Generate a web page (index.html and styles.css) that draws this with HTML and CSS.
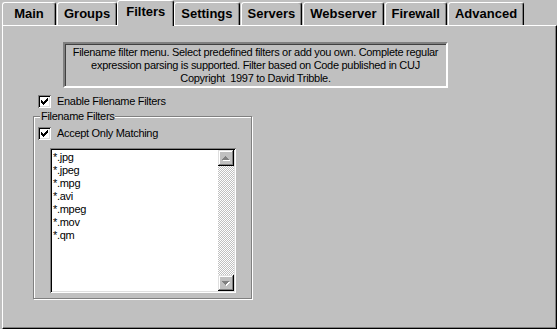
FILE: index.html
```html
<!DOCTYPE html>
<html lang="en">
<head>
  <meta charset="UTF-8" />
  <title>Filters</title>
  <link rel="stylesheet" href="styles.css">
</head>
<body>
  <div class="tabs">
    <div class="tab">Main</div>
    <div class="tab">Groups</div>
    <div class="tab tab-active">Filters</div>
    <div class="tab">Settings</div>
    <div class="tab">Servers</div>
    <div class="tab">Webserver</div>
    <div class="tab">Firewall</div>
    <div class="tab">Advanced</div>
  </div>
  <div class="panel">
    <div class="info">
      Filename filter menu. Select predefined filters or add you own. Complete regular<br>
      expression parsing is supported. Filter based on Code published in CUJ<br>
      Copyright&nbsp; 1997 to David Tribble.
    </div>
    <label class="check check-enable">
      <span class="box">
        <svg width="13" height="13" viewBox="0 0 13 13" shape-rendering="crispEdges"><path d="M9 3h1v1h-1z M8 4h2v1h-2z M3 5h1v1h-1z M7 5h3v1h-3z M3 6h2v1h-2z M6 6h3v1h-3z M3 7h5v1h-5z M4 8h3v1h-3z M5 9h1v1h-1z" fill="#000"/></svg>
      </span>
      Enable Filename Filters
    </label>
    <fieldset class="group">
      <legend>Filename Filters</legend>
      <label class="check">
        <span class="box">
          <svg width="13" height="13" viewBox="0 0 13 13" shape-rendering="crispEdges"><path d="M9 3h1v1h-1z M8 4h2v1h-2z M3 5h1v1h-1z M7 5h3v1h-3z M3 6h2v1h-2z M6 6h3v1h-3z M3 7h5v1h-5z M4 8h3v1h-3z M5 9h1v1h-1z" fill="#000"/></svg>
        </span>
        Accept Only Matching
      </label>
      <div class="listbox">
        <ul class="items">
          <li>*.jpg</li>
          <li>*.jpeg</li>
          <li>*.mpg</li>
          <li>*.avi</li>
          <li>*.mpeg</li>
          <li>*.mov</li>
          <li>*.qm</li>
        </ul>
        <div class="scrollbar">
          <div class="sb-btn">
            <svg width="16" height="16" viewBox="0 0 16 16" shape-rendering="crispEdges">
              <path d="M8 7h1v1h1v1h1v1h1v1H5V10h1V9h1V8h1z" fill="#fff"/>
              <path d="M7 6h1v1h1v1h1v1h1v1H4V9h1V8h1V7h1z" fill="#808080"/>
            </svg>
          </div>
          <div class="sb-track"></div>
          <div class="sb-btn">
            <svg width="16" height="16" viewBox="0 0 16 16" shape-rendering="crispEdges">
              <path d="M5 7h7v1h-1v1h-1v1h-1v1H8V10H7V9H6V8H5z" fill="#fff"/>
              <path d="M4 6h7v1h-1v1h-1v1h-1v1H7V9H6V8H5V7H4z" fill="#808080"/>
            </svg>
          </div>
        </div>
      </div>
    </fieldset>
  </div>
</body>
</html>
```

FILE: styles.css
```css
:root {
  --face: #c0c0c0;
  --light: #dfdfdf;
  --shadow: #808080;
  --dark: #000;
}
* { box-sizing: border-box; }
body {
  margin: 0;
  padding-left: 2px;
  height: 100vh;
  display: flex;
  flex-direction: column;
  overflow: hidden;
  background: var(--face);
  color: #000;
  font-family: "Liberation Sans", Arial, sans-serif;
  font-size: 11px;
  letter-spacing: -0.3px;
}

/* tab strip */
.tabs {
  display: flex;
  align-items: flex-end;
  height: 25px;
}
.tab {
  height: 23px;
  min-width: 54px;
  margin-right: 1px;
  padding: 0 6px;
  background: var(--face);
  border: 1px solid;
  border-bottom: none;
  border-color: #fff var(--dark) var(--dark) #fff;
  border-radius: 3px 3px 0 0;
  box-shadow: inset -1px 0 var(--shadow);
  font-size: 13px;
  font-weight: bold;
  letter-spacing: 0;
  line-height: 22px;
  text-align: center;
}
.tab-active {
  position: relative;
  z-index: 1;
  height: 26px;
  margin: 0 0 -1px -1px;
  padding: 0 8px 3px;
}

/* page */
.panel {
  flex: 1;
  padding: 16px 0 0 0;
  border: 1px solid;
  border-color: #fff var(--dark) var(--dark) #fff;
  box-shadow: inset -1px -1px var(--shadow);
}
.info {
  width: 385px;
  margin-left: 60px;
  padding: 2px 0 1px;
  border: 2px solid;
  border-color: var(--shadow) #fff #fff var(--shadow);
  box-shadow: inset 1px 1px #404040;
  line-height: 13px;
  text-align: center;
}

.check {
  display: flex;
  align-items: center;
  gap: 6px;
  height: 13px;
  line-height: 13px;
}
.check-enable { margin: 7px 0 0 35px; }
.box {
  flex: none;
  display: flex;
  width: 13px;
  height: 13px;
  background: #fff;
  box-shadow: inset 1px 1px var(--shadow), inset -1px -1px #fff,
              inset 2px 2px var(--dark), inset -2px -2px var(--light);
}

.group {
  width: 219px;
  margin: 2px 0 0 30px;
  padding: 0 0 5px 4px;
  min-inline-size: auto;
  border: 1px solid var(--shadow);
  box-shadow: inset 1px 1px #fff, 1px 1px #fff;
}
.group legend {
  margin-left: 2px;
  padding: 0 1px;
  background: var(--face);
  line-height: 13px;
}
.group .check { margin-top: 4px; }

.listbox {
  display: flex;
  width: 186px;
  height: 145px;
  margin: 8px 0 0 12px;
  padding: 2px;
  background: #fff;
  box-shadow: inset 1px 1px var(--shadow), inset -1px -1px #fff,
              inset 2px 2px var(--dark), inset -2px -2px var(--light);
}
.items {
  flex: 1;
  margin: 0;
  padding: 1px 0 0 1px;
  list-style: none;
  line-height: 13px;
}
.scrollbar {
  display: flex;
  flex-direction: column;
  width: 16px;
}
.sb-btn {
  display: flex;
  height: 16px;
  background: var(--face);
  box-shadow: inset -1px -1px var(--dark), inset 1px 1px var(--light),
              inset -2px -2px var(--shadow), inset 2px 2px #fff;
}
.sb-track {
  flex: 1;
  background: repeating-conic-gradient(var(--face) 0 25%, #fff 0 50%) 0 0 / 2px 2px;
}
```
